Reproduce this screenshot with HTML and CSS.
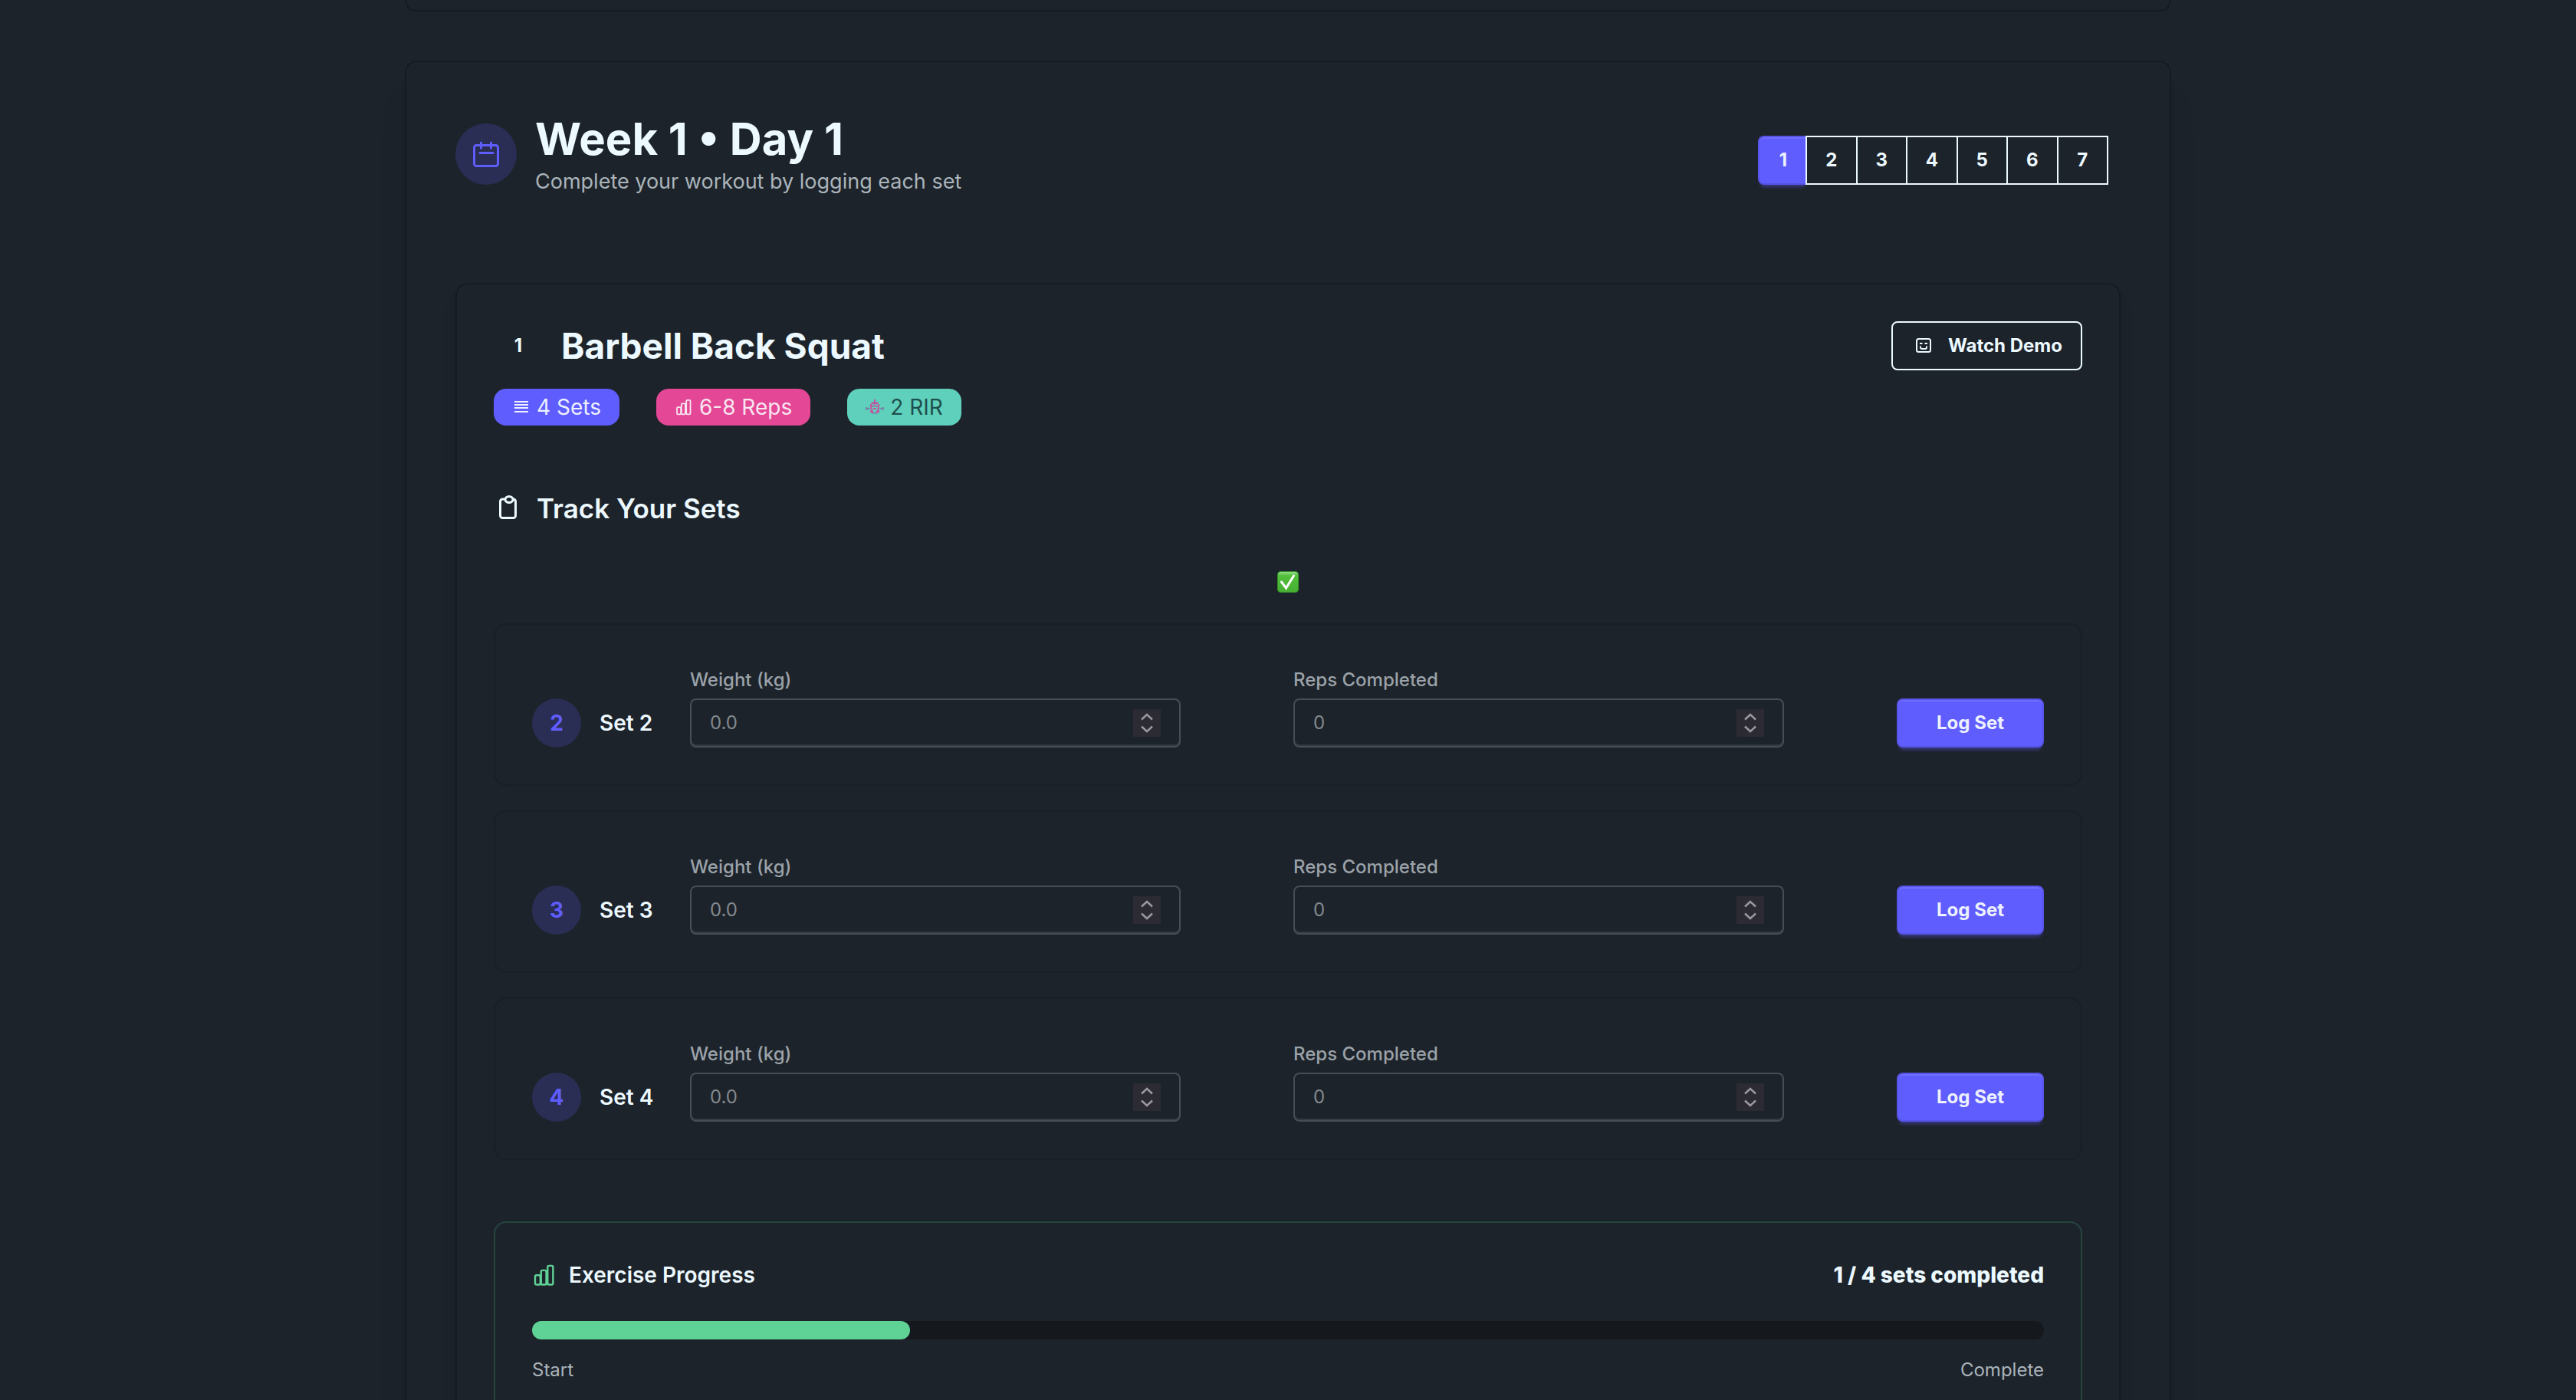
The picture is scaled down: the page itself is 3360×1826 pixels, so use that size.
FILE: index.html
```html
<!DOCTYPE html>
<html lang="en">
<head>
<meta charset="utf-8">
<title>Week 1 • Day 1</title>
<link rel="stylesheet" href="styles.css">
</head>
<body>
<svg class="sprite" aria-hidden="true">
  <symbol id="bars" viewBox="0 0 24 24"><path fill="none" stroke="currentColor" stroke-width="1.8" stroke-linejoin="round" d="M3 13.5c0-.8.6-1.3 1.300-1.300h2.500c.8 0 1.300.5 1.300 1.300v6.600c0 .8-.5 1.300-1.300 1.300H4.300c-.7 0-1.300-.5-1.300-1.300zM8.800 8.700c0-.8.5-1.300 1.300-1.300h2.500c.8 0 1.300.5 1.300 1.300v11.400c0 .8-.5 1.300-1.300 1.300h-2.500c-.8 0-1.300-.5-1.300-1.300zM15.200 4.200c0-.8.500-1.300 1.300-1.300H19.200c.8 0 1.300.5 1.300 1.300v15.900c0 .8-.5 1.300-1.300 1.300h-2.700c-.8 0-1.300-.5-1.300-1.300z"/></symbol>
  <symbol id="updown" viewBox="0 0 36 36"><path fill="none" stroke="currentColor" stroke-width="2.500" d="M11 13.500 18 7l7 6.500M11 22.500 18 29l7-6.500"/></symbol>
</svg>
<main class="page">
  <section class="card card-previous"></section>
  <section class="card">
    <header class="day-header">
      <div class="day-heading">
        <span class="day-icon"><svg viewBox="0 0 40 40"><path fill="none" stroke="currentColor" stroke-width="3" stroke-linecap="round" stroke-linejoin="round" d="M7.500 8.500h25a3 3 0 0 1 3 3v21a3 3 0 0 1-3 3h-25a3 3 0 0 1-3-3v-21a3 3 0 0 1 3-3zM13.500 5v7M26.500 5v7M12 18.500h17"/></svg></span>
        <div>
          <h1>Week 1 • Day 1</h1>
          <p>Complete your workout by logging each set</p>
        </div>
      </div>
      <nav class="days" aria-label="Days">
        <button class="day active">1</button><button class="day">2</button><button class="day">3</button><button class="day">4</button><button class="day">5</button><button class="day">6</button><button class="day">7</button>
      </nav>
    </header>
    <article class="exercise">
      <header class="exercise-header">
        <span class="exercise-number">1</span>
        <h2>Barbell Back Squat</h2>
        <button class="demo"><svg viewBox="0 0 24 24"><rect x="3" y="3" width="18" height="17" rx="2.500" fill="none" stroke="currentColor" stroke-width="2"/><path fill="none" stroke="currentColor" stroke-width="2" d="M7 9h3.500M13.500 9H17M8 12.500V14a2 2 0 0 0 2 2h4a2 2 0 0 0 2-2v-1.500"/></svg>Watch Demo</button>
      </header>
      <div class="badges">
        <span class="badge sets"><svg viewBox="0 0 24 24"><path fill="none" stroke="currentColor" stroke-width="2" d="M3 5h18M3 9h18M3 13h18M3 18h18"/></svg>4 Sets</span>
        <span class="badge reps"><svg><use href="#bars"/></svg>6-8 Reps</span>
        <span class="badge rir"><svg viewBox="0 0 24 24"><path fill="none" stroke="#7683a8" stroke-width="1.600" d="M1 12v4M0 14h6M23 12v4M24 14h-6M3 12.500v3M21 12.500v3M8 6h8M9 20h6M10 11h4"/><path fill="none" stroke="#c455a0" stroke-width="2" d="M12 2v4M7.500 7h3l1.500 1 1.500-1h3M7 8v4l1 4 2 3M17 8v4l-1 4-2 3M8.500 10l2 1M15.500 10l-2 1M10 14h4M6 17l3 2.500M18 17l-3 2.500"/></svg>2 RIR</span>
      </div>
      <h3><svg viewBox="0 0 40 40"><path fill="none" stroke="currentColor" stroke-width="3" stroke-linejoin="round" d="M15 8h-3.500a3 3 0 0 0-3 3v18.500a3 3 0 0 0 3 3h14a3 3 0 0 0 3-3V11a3 3 0 0 0-3-3H25"/><ellipse cx="20" cy="8.500" rx="5" ry="4" fill="none" stroke="currentColor" stroke-width="3"/></svg>Track Your Sets</h3>
      <div class="done"><svg viewBox="0 0 28 28" role="img" aria-label="Set 1 done"><defs><linearGradient id="tick" x2="0" y2="1"><stop stop-color="#9be08c"/><stop offset=".2" stop-color="#52c03c"/><stop offset="1" stop-color="#46ad30"/></linearGradient></defs><rect x=".5" y=".5" width="27" height="27" rx="4" fill="url(#tick)" stroke="#35912a"/><path d="M5.500 14 11.500 22 21.500 6" fill="none" stroke="#fff" stroke-width="3" stroke-linecap="round"/></svg></div>
      <div class="set-list">
        <form class="set">
          <span class="set-number">2</span><span class="set-name">Set 2</span>
          <div class="field"><label for="w2">Weight (kg)</label><div class="box"><input id="w2" type="text" inputmode="decimal" placeholder="0.0"><span class="stepper"><svg><use href="#updown"/></svg></span></div></div>
          <div class="field"><label for="r2">Reps Completed</label><div class="box"><input id="r2" type="text" inputmode="numeric" placeholder="0"><span class="stepper"><svg><use href="#updown"/></svg></span></div></div>
          <button class="log" type="button">Log Set</button>
        </form>
        <form class="set">
          <span class="set-number">3</span><span class="set-name">Set 3</span>
          <div class="field"><label for="w3">Weight (kg)</label><div class="box"><input id="w3" type="text" inputmode="decimal" placeholder="0.0"><span class="stepper"><svg><use href="#updown"/></svg></span></div></div>
          <div class="field"><label for="r3">Reps Completed</label><div class="box"><input id="r3" type="text" inputmode="numeric" placeholder="0"><span class="stepper"><svg><use href="#updown"/></svg></span></div></div>
          <button class="log" type="button">Log Set</button>
        </form>
        <form class="set">
          <span class="set-number">4</span><span class="set-name">Set 4</span>
          <div class="field"><label for="w4">Weight (kg)</label><div class="box"><input id="w4" type="text" inputmode="decimal" placeholder="0.0"><span class="stepper"><svg><use href="#updown"/></svg></span></div></div>
          <div class="field"><label for="r4">Reps Completed</label><div class="box"><input id="r4" type="text" inputmode="numeric" placeholder="0"><span class="stepper"><svg><use href="#updown"/></svg></span></div></div>
          <button class="log" type="button">Log Set</button>
        </form>
      </div>
      <section class="progress">
        <div class="progress-head">
          <svg><use href="#bars"/></svg>
          <h4>Exercise Progress</h4>
          <strong>1 / 4 sets completed</strong>
        </div>
        <div class="track" role="progressbar" aria-valuenow="1" aria-valuemin="0" aria-valuemax="4"><div class="fill" style="width:25%"></div></div>
        <div class="ends"><span>Start</span><span>Complete</span></div>
      </section>
    </article>
  </section>
</main>
</body>
</html>
```

FILE: styles.css
```css
:root {
  --base: #1d232a;
  --line: #171b20;
  --content: #ecf9ff;
  --muted: #aab4bb;
  --primary: #605dff;
  --success: #5fd296;
}
* { box-sizing: border-box; margin: 0; }
body {
  background: var(--base);
  color: var(--content);
  font: 28px/40px Inter, "Liberation Sans", sans-serif;
}
button, input { font: inherit; color: inherit; }
svg { display: block; flex: none; }
.sprite { position: absolute; width: 0; height: 0; }

.page {
  height: 100vh;
  overflow: hidden;
  display: flex;
  flex-direction: column;
  align-items: center;
  gap: 64px;
}
.card {
  flex: none;
  width: 100%;
  max-width: 2304px;
  padding: 64px;
  border: 2px solid var(--line);
  border-radius: 16px;
  box-shadow: 0 40px 50px -10px rgb(0 0 0 / .08), 0 16px 20px -12px rgb(0 0 0 / .1);
}
.card-previous { height: 15px; padding: 0; border-top: 0; border-radius: 0 0 16px 16px; }

.day-header {
  display: flex;
  justify-content: space-between;
  align-items: center;
  margin-bottom: 112px;
}
.day-heading { display: flex; align-items: center; gap: 24px; }
.day-icon {
  display: grid;
  place-items: center;
  width: 80px;
  height: 80px;
  border-radius: 50%;
  background: #2a2e54;
  color: var(--primary);
}
.day-icon svg { width: 40px; height: 40px; }
h1 { font-size: 58px; line-height: 72px; font-weight: 700; }
.day-heading p { color: var(--muted); font-size: 27px; }
.days { display: flex; width: 473px; padding: 16px 16px 0 0; }
.day {
  flex: 1;
  height: 64px;
  margin-left: -2px;
  padding: 0;
  border: 2px solid var(--content);
  background: none;
  font-size: 24px;
  font-weight: 700;
}
.active, .log {
  border: 2px solid #5754e8;
  background: var(--primary);
  color: #edf1fe;
  box-shadow: inset 0 2px #706dff, 0 6px 4px -3px rgb(96 93 255 / .4);
}
.active { flex: none; width: 64px; margin-left: 0; border-right: 0; border-radius: 8px 0 0 8px; }

.exercise {
  padding: 48px;
  border: 2px solid var(--line);
  border-radius: 16px;
  box-shadow: 0 20px 30px -6px rgb(0 0 0 / .08), 0 8px 12px -8px rgb(0 0 0 / .1);
}
.exercise-header { display: flex; align-items: center; gap: 24px; }
.exercise-number { width: 64px; text-align: center; font-size: 24px; font-weight: 700; }
h2 { font-size: 46px; line-height: 64px; font-weight: 700; }
.demo {
  display: flex;
  align-items: center;
  gap: 16px;
  height: 64px;
  margin-left: auto;
  padding: 0 24px;
  border: 2px solid var(--content);
  border-radius: 8px;
  background: none;
  font-size: 24px;
  font-weight: 700;
}
.demo svg { width: 32px; height: 24px; }

.badges { display: flex; gap: 48px; margin-top: 24px; }
.badge {
  display: flex;
  align-items: center;
  gap: 8px;
  height: 48px;
  padding: 0 24px;
  border-radius: 16px;
}
.badge svg { width: 24px; height: 24px; }
.sets { background: var(--primary); color: #edf1fe; }
.reps { background: #e44796; color: #f9e4f0; }
.rir { background: #5fd0bc; color: #1f4f4c; }

h3 {
  display: flex;
  align-items: center;
  gap: 16px;
  margin-top: 80px;
  font-size: 35px;
  line-height: 56px;
  font-weight: 600;
}
h3 svg { width: 40px; height: 40px; }
.done { display: flex; justify-content: center; padding: 54px 0 40px; }
.done svg { width: 28px; height: 28px; }

.set-list { display: grid; gap: 32px; }
.set {
  display: flex;
  align-items: flex-end;
  padding: 48px;
  border: 2px solid #1a1f24;
  border-radius: 16px;
}
.set-number {
  width: 64px;
  border-radius: 50%;
  background: #2a2e54;
  color: var(--primary);
  line-height: 64px;
  font-weight: 700;
  text-align: center;
}
.set-name { width: 94px; padding-left: 24px; line-height: 64px; font-weight: 600; white-space: nowrap; }
.field { flex: 1; margin-left: 48px; }
.field label {
  display: block;
  padding: 8px 0;
  color: #9ba2a9;
  font-size: 24px;
  line-height: 32px;
  font-weight: 500;
}
.box {
  display: flex;
  align-items: center;
  max-width: 640px;
  height: 64px;
  padding: 0 24px;
  border: 2px solid #484d55;
  border-radius: 8px;
  box-shadow: inset 0 -2px #343a41;
}
.box input {
  flex: 1;
  min-width: 0;
  padding: 0;
  border: 0;
  outline: 0;
  background: none;
  font-size: 24px;
}
.box input::placeholder { color: #82898f; opacity: 1; }
.stepper { background: #2c2a33; color: #9b989f; }
.stepper svg { width: 36px; height: 36px; }
.log {
  width: 192px;
  height: 64px;
  margin-left: 48px;
  border-radius: 8px;
  font-size: 24px;
  font-weight: 700;
}

.progress {
  margin-top: 80px;
  padding: 48px;
  border: 2px solid #24463f;
  border-radius: 16px;
}
.progress-head { display: flex; align-items: center; gap: 16px; }
.progress-head svg { width: 32px; height: 32px; color: var(--success); }
h4 { font-size: 28px; font-weight: 600; }
.progress-head strong { margin-left: auto; font-weight: 800; }
.track { height: 24px; margin: 40px 0 24px; border-radius: 12px; background: #15191e; }
.fill { height: 24px; border-radius: 12px; background: var(--success); }
.ends {
  display: flex;
  justify-content: space-between;
  color: var(--muted);
  font-size: 24px;
  line-height: 32px;
}
```
